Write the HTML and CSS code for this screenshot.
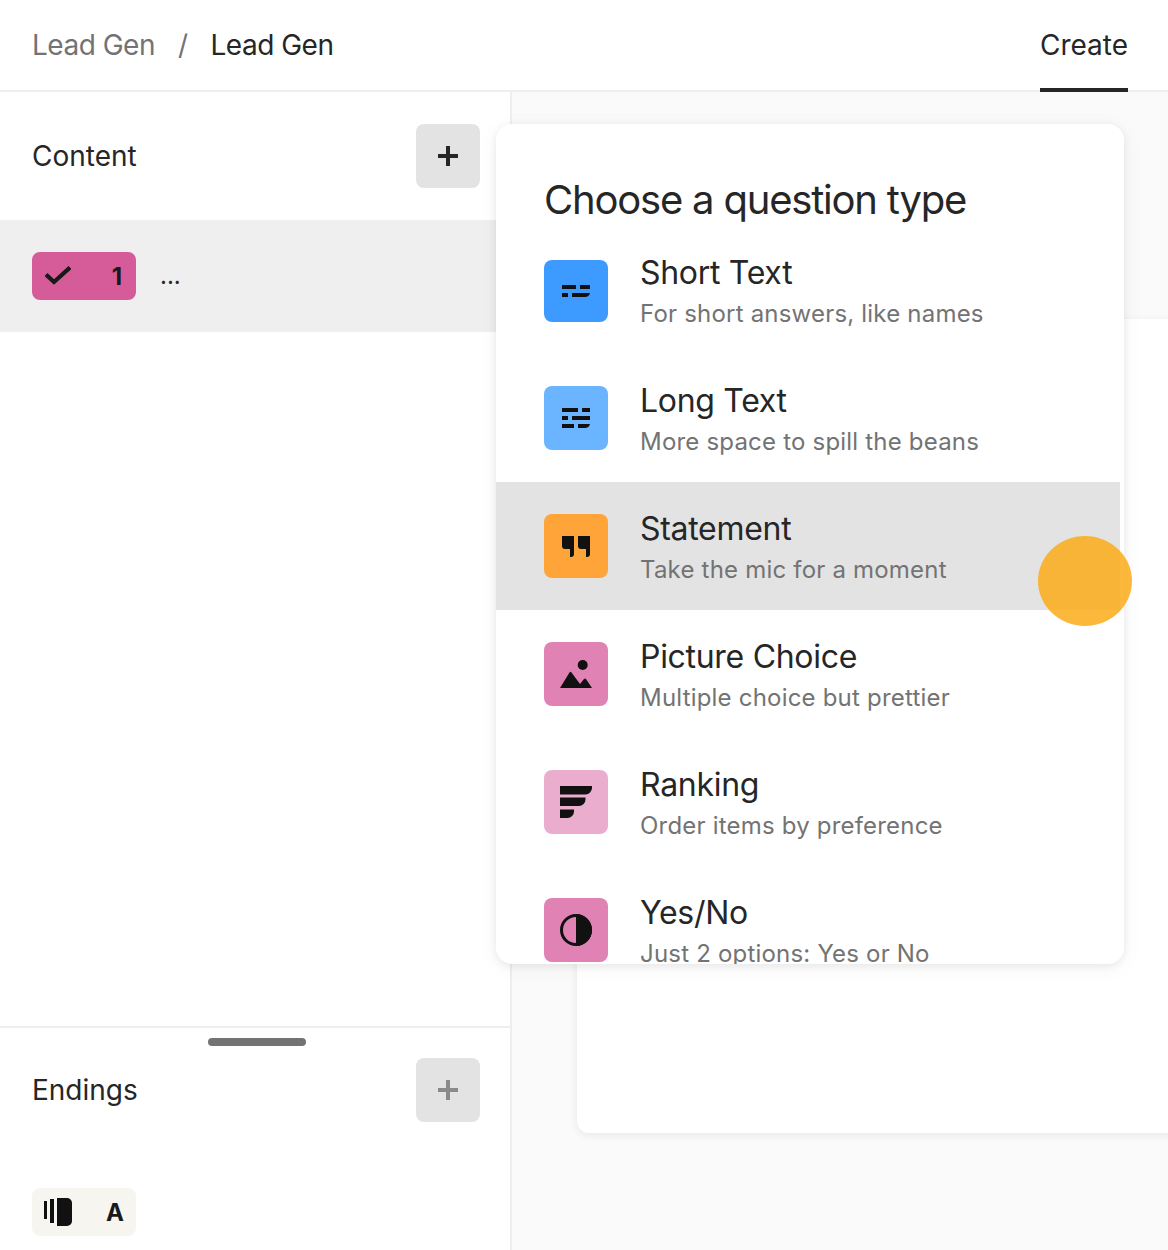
FILE: index.html
```html
<!DOCTYPE html>
<html lang="en">
<head>
    <meta charset="UTF-8">
    <meta name="viewport" content="width=device-width, initial-scale=1.0">
    <title>Lead Gen</title>
    <link rel="stylesheet" href="styles.css">
</head>
<body>
  <header class="header">
    <nav class="crumbs">
      <span class="crumb-parent">Lead Gen</span>
      <span class="crumb-sep">/</span>
      <span class="crumb-current">Lead Gen</span>
    </nav>
    <a class="tab-active">Create</a>
  </header>

  <div class="workspace">
    <aside class="sidebar">
      <section class="content-panel">
        <div class="panel-head">
          <h3>Content</h3>
          <button class="add-button">
            <svg width="20" height="20" viewBox="0 0 20 20"><path d="M8 0h4v8h8v4h-8v8H8v-8H0V8h8z"/></svg>
          </button>
        </div>
        <div class="question-row">
          <div class="chip chip-pink">
            <svg width="26" height="20" viewBox="0 0 26 20"><path d="M1 8.500L9 16L25 1.500" fill="none" stroke="#191919" stroke-width="4.200"/></svg>
            <span>1</span>
          </div>
          <span class="question-title">...</span>
        </div>
      </section>

      <section class="endings-panel">
        <div class="drag-handle"></div>
        <div class="panel-head panel-head-endings">
          <h3>Endings</h3>
          <button class="add-button add-button-muted">
            <svg width="20" height="20" viewBox="0 0 20 20"><path d="M8 0h4v8h8v4h-8v8H8v-8H0V8h8z"/></svg>
          </button>
        </div>
        <div class="chip chip-ending">
          <svg width="28" height="28" viewBox="0 0 28 28"><path d="M0 3h3v18H0zM6 1h4v24H6zM13 0h10a5 5 0 0 1 5 5v18a5 5 0 0 1-5 5H13z"/></svg>
          <span>A</span>
        </div>
      </section>
    </aside>

    <main class="canvas-area">
      <div class="canvas-card"></div>
    </main>
  </div>

  <div class="type-popup">
    <h2>Choose a question type</h2>
    <ul class="type-list">
      <li class="type-row">
        <div class="type-icon icon-blue icon-first">
          <svg width="28" height="12" viewBox="0 0 28 12"><path d="M0 0h14v4H0zM18 0h10v4H18zM0 8h6v4H0zM10 8h18q-1 4-5 4H10z"/></svg>
        </div>
        <div class="type-text">
          <div class="type-name">Short Text</div>
          <div class="type-desc">For short answers, like names</div>
        </div>
      </li>
      <li class="type-row">
        <div class="type-icon icon-light-blue">
          <svg width="28" height="20" viewBox="0 0 28 20"><path d="M0 0h16v4H0zM20 0h8v4h-8zM0 8h6v4H0zM10 8h18v4H10zM0 16h12v4H0zM16 16h12q-1 4-5 4h-7z"/></svg>
        </div>
        <div class="type-text">
          <div class="type-name">Long Text</div>
          <div class="type-desc">More space to spill the beans</div>
        </div>
      </li>
      <li class="type-row type-row-hover">
        <div class="type-icon icon-orange">
          <svg width="28" height="21" viewBox="0 0 28 21"><path d="M0 0h12v18q0 3-3 3H8v-8H3q-3 0-3-3zM16 0h12v18q0 3-3 3h-1v-8h-5q-3 0-3-3z"/></svg>
        </div>
        <div class="type-text">
          <div class="type-name">Statement</div>
          <div class="type-desc">Take the mic for a moment</div>
        </div>
      </li>
      <li class="type-row">
        <div class="type-icon icon-pink">
          <svg width="32" height="28" viewBox="0 0 32 28"><circle cx="22.700" cy="5" r="5"/><path d="M0 28l9.500-15.500q1-1.500 2 0L20 24l4-5q1-1 2 0l6 9z"/></svg>
        </div>
        <div class="type-text">
          <div class="type-name">Picture Choice</div>
          <div class="type-desc">Multiple choice but prettier</div>
        </div>
      </li>
      <li class="type-row">
        <div class="type-icon icon-light-pink">
          <svg width="32" height="32" viewBox="0 0 32 32"><path d="M0 0h32v2a6.500 6.500 0 0 1-6.500 6.500H0zM0 11.500h25.500v2a6.500 6.500 0 0 1-6.500 6.500H0zM0 23.500h14v2a6.500 6.500 0 0 1-6.500 6.500H0z"/></svg>
        </div>
        <div class="type-text">
          <div class="type-name">Ranking</div>
          <div class="type-desc">Order items by preference</div>
        </div>
      </li>
      <li class="type-row">
        <div class="type-icon icon-pink">
          <svg width="32" height="32" viewBox="0 0 32 32"><circle cx="16" cy="16" r="14.500" fill="none" stroke="#111" stroke-width="3"/><path d="M16 0a16 16 0 0 1 0 32z"/></svg>
        </div>
        <div class="type-text">
          <div class="type-name">Yes/No</div>
          <div class="type-desc">Just 2 options: Yes or No</div>
        </div>
      </li>
    </ul>
  </div>

  <div class="cursor-dot"></div>
</body>
</html>
```

FILE: styles.css
```css
* {
  box-sizing: border-box;
}

html,
body {
  height: 100%;
}

body {
  font-family: Inter, "Liberation Sans", sans-serif;
  margin: 0;
  padding: 0;
  height: 1250px;
  overflow: hidden;
  position: relative;
  display: flex;
  flex-direction: column;
  background-color: #fff;
  color: #262627;
}

/* top bar */
.header {
  display: flex;
  justify-content: space-between;
  align-items: stretch;
  height: 92px;
  padding: 0 40px 0 32px;
  border-bottom: 2px solid #eee;
}

.crumbs {
  display: flex;
  align-items: center;
  font-size: 28px;
  letter-spacing: -0.5px;
}

.crumb-parent {
  color: #737373;
}

.crumb-sep {
  color: #737373;
  margin: 0 23px;
}

.tab-active {
  display: flex;
  align-items: center;
  height: 92px;
  padding-top: 2px;
  font-size: 28px;
  border-bottom: 4px solid #262627;
}

.workspace {
  flex: 1;
  display: flex;
  min-height: 0;
}

/* left column */
.sidebar {
  width: 512px;
  flex-shrink: 0;
  display: flex;
  flex-direction: column;
  border-right: 2px solid #eee;
}

.content-panel {
  flex: 1;
}

.panel-head {
  display: flex;
  justify-content: space-between;
  align-items: center;
  height: 128px;
  padding: 0 30px 0 32px;
}

.panel-head h3 {
  margin: 0;
  font-size: 28px;
  font-weight: 400;
}

.add-button {
  width: 64px;
  height: 64px;
  display: flex;
  align-items: center;
  justify-content: center;
  padding: 0;
  border: none;
  border-radius: 8px;
  background-color: #e3e3e3;
  fill: #262627;
}

.add-button-muted {
  fill: #8a8a8a;
}

.question-row {
  display: flex;
  align-items: center;
  height: 112px;
  padding-left: 32px;
  background-color: #efefef;
}

.chip {
  width: 104px;
  height: 48px;
  display: flex;
  justify-content: space-between;
  align-items: center;
  padding: 0 14px 0 13px;
  border-radius: 8px;
  font-size: 24px;
  font-weight: 700;
  color: #191919;
}

.chip-pink {
  background-color: #d65c99;
}

.chip-ending {
  margin-left: 32px;
  padding: 0 12px 0 12px;
  background-color: #f7f5f0;
  fill: #111;
}

.question-title {
  margin-left: 24px;
  font-size: 24px;
  line-height: 24px;
}

.endings-panel {
  height: 224px;
  border-top: 2px solid #eee;
}

.drag-handle {
  width: 98px;
  height: 8px;
  margin: 10px 0 0 208px;
  border-radius: 4px;
  background-color: #737373;
}

.panel-head-endings {
  height: 64px;
  margin: 12px 0 66px;
}

/* right side */
.canvas-area {
  flex: 1;
  min-width: 0;
  overflow: hidden;
  padding: 227px 0 117px 65px;
  background-color: #fafafa;
}

.canvas-card {
  height: 100%;
  margin-right: -40px;
  border-radius: 12px;
  background-color: #fff;
  box-shadow: 0 2px 8px rgba(0, 0, 0, 0.08);
}

/* question type menu */
.type-popup {
  position: absolute;
  left: 496px;
  top: 124px;
  width: 628px;
  height: 840px;
  overflow: hidden;
  border-radius: 16px;
  background-color: #fff;
  box-shadow: 0 2px 8px rgba(0, 0, 0, 0.08), 0 4px 24px rgba(0, 0, 0, 0.04);
}

.type-popup h2 {
  margin: 0;
  padding: 49px 48px 0;
  height: 102px;
  font-size: 40px;
  line-height: 54px;
  font-weight: 400;
  letter-spacing: -1.2px;
}

.type-list {
  list-style: none;
  margin: 0 4px 0 0;
  padding: 0;
}

.type-row {
  display: flex;
  height: 128px;
  padding: 32px 48px 0;
}

.type-row-hover {
  background-color: #e3e3e3;
}

.type-icon {
  width: 64px;
  height: 64px;
  flex-shrink: 0;
  display: flex;
  align-items: center;
  justify-content: center;
  border-radius: 8px;
  fill: #111;
}

.icon-first {
  height: 62px;
  margin-top: 2px;
}

.icon-blue {
  background-color: #3d9bff;
}

.icon-light-blue {
  background-color: #6bb4ff;
}

.icon-orange {
  background-color: #ffa438;
}

.icon-pink {
  background-color: #e082b4;
}

.icon-light-pink {
  background-color: #ebadcd;
}

.type-text {
  margin-left: 32px;
}

.type-name {
  font-size: 32px;
  line-height: 32px;
  margin-top: -1px;
  letter-spacing: -0.3px;
}

.type-desc {
  margin-top: 8px;
  font-size: 24px;
  line-height: 34px;
  letter-spacing: 0.2px;
  color: #737373;
}

.cursor-dot {
  position: absolute;
  left: 1038px;
  top: 536px;
  width: 94px;
  height: 90px;
  border-radius: 50%;
  background-color: rgba(252, 172, 27, 0.86);
}
```
